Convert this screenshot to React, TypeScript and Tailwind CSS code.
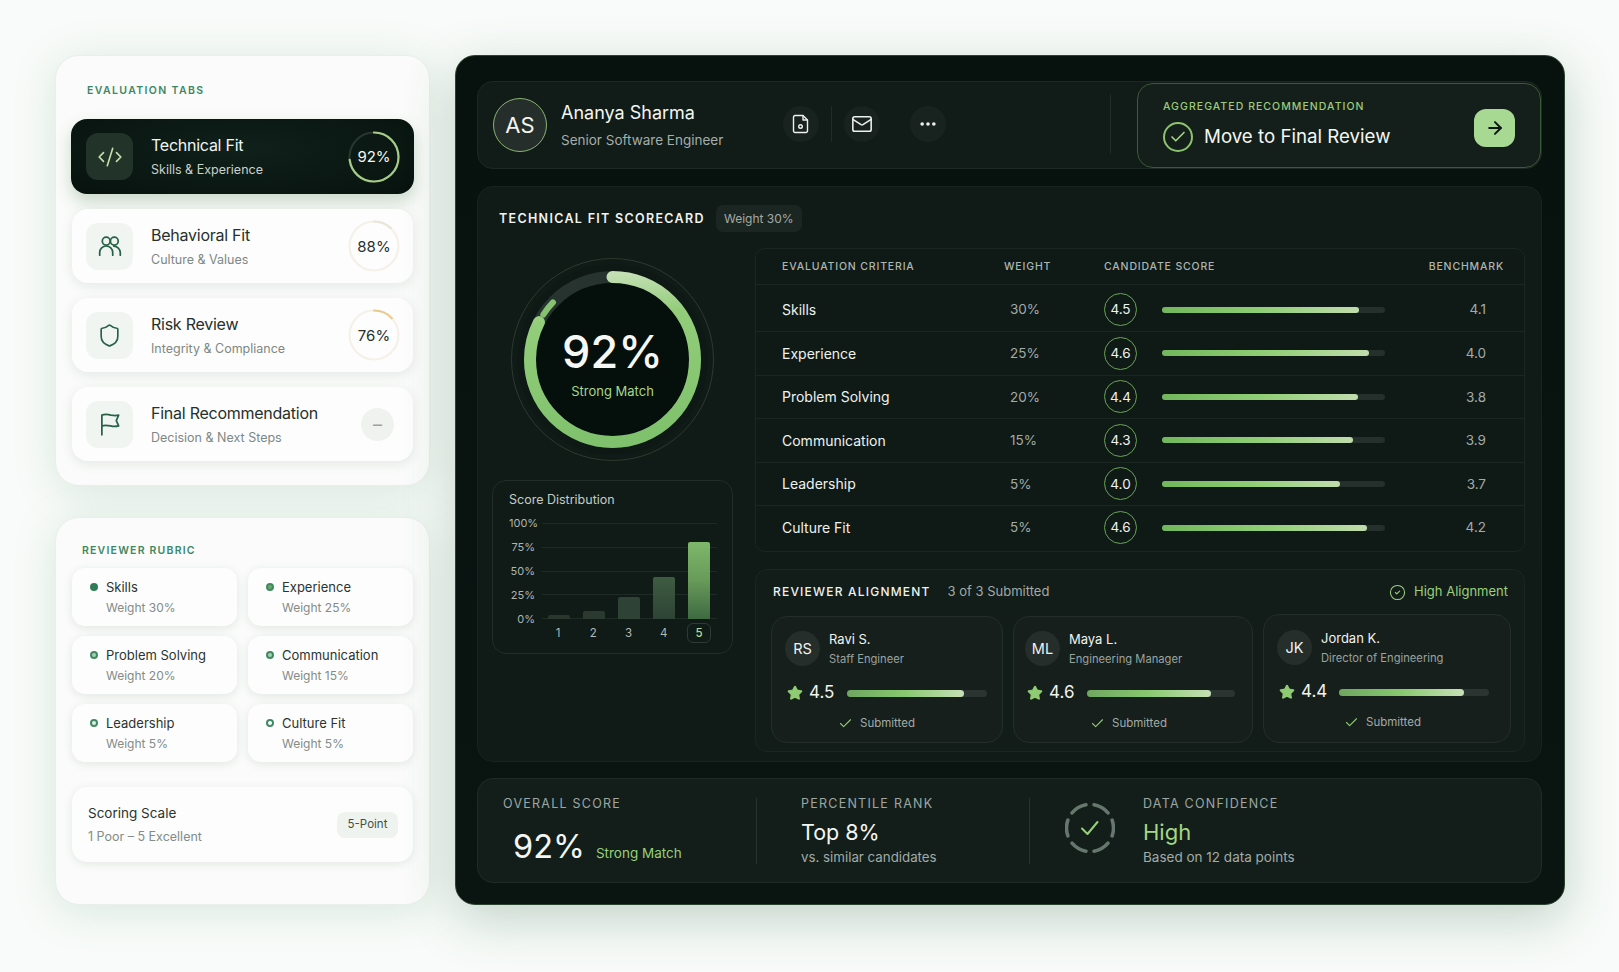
import { ArrowRight, Check, CircleCheck, CodeXml, Ellipsis, Mail, Shield, Star } from "lucide-react";
import type { ReactNode } from "react";

const PeopleIcon = () => (
  <svg width="26" height="26" viewBox="0 0 24 24" fill="none" stroke="currentColor" strokeWidth="1.6" strokeLinecap="round">
    <circle cx="8.500" cy="7.500" r="3.600" />
    <circle cx="16" cy="7.500" r="3.600" />
    <path d="M2.500 20.500v-2.500a6 6 0 0 1 12 0v2.500" />
    <path d="M15.500 12.200a6 6 0 0 1 6 5.800v2.500" />
  </svg>
);

const FlagIcon = () => (
  <svg width="26" height="26" viewBox="0 0 24 24" fill="none" stroke="currentColor" strokeWidth="1.6" strokeLinecap="round" strokeLinejoin="round">
    <path d="M4.500 22V3.800c3-1 6-.6 8.500 0 2.500.5 5 .5 7 0l-2.200 5 2.200 5c-2.500.7-5 .6-7.500 0-2.800-.6-5.500-.9-8 0" />
  </svg>
);

const tabs = [
  { title: "Behavioral Fit", sub: "Culture & Values", score: "88%", icon: <PeopleIcon />, arc: 0.12, color: "#e9e5d6" },
  { title: "Risk Review", sub: "Integrity & Compliance", score: "76%", icon: <Shield size={25} strokeWidth={1.6} />, arc: 0.13, color: "#ecca8e" },
];

const rubric = [
  { name: "Skills", weight: "Weight 30%", dot: "bg-[#2f7d58] border-[#2f7d58]" },
  { name: "Experience", weight: "Weight 25%", dot: "bg-[#6aa86a] border-[#3f8a5f]" },
  { name: "Problem Solving", weight: "Weight 20%", dot: "bg-[#a9cdb0] border-[#3f8a64]" },
  { name: "Communication", weight: "Weight 15%", dot: "bg-[#a9cdb0] border-[#3f8a64]" },
  { name: "Leadership", weight: "Weight 5%", dot: "bg-[#e3efe4] border-[#3f8a64]" },
  { name: "Culture Fit", weight: "Weight 5%", dot: "bg-white border-[#3f8a64]" },
];

const criteria = [
  { name: "Skills", weight: "30%", score: "4.5", fill: 88.5, bench: "4.1" },
  { name: "Experience", weight: "25%", score: "4.6", fill: 92.7, bench: "4.0" },
  { name: "Problem Solving", weight: "20%", score: "4.4", fill: 88, bench: "3.8" },
  { name: "Communication", weight: "15%", score: "4.3", fill: 85.5, bench: "3.9" },
  { name: "Leadership", weight: "5%", score: "4.0", fill: 79.8, bench: "3.7" },
  { name: "Culture Fit", weight: "5%", score: "4.6", fill: 92, bench: "4.2" },
];

const reviewers = [
  { initials: "RS", name: "Ravi S.", role: "Staff Engineer", score: "4.5", fill: 83.5, bar: "w-[140px]", pad: "pl-[13px] pt-[13px] h-[127px]", sub: "pr-[34px]" },
  { initials: "ML", name: "Maya L.", role: "Engineering Manager", score: "4.6", fill: 84, bar: "w-[148px]", pad: "pl-[11px] pt-[13px] h-[127px]", sub: "pr-[20px]" },
  { initials: "JK", name: "Jordan K.", role: "Director of Engineering", score: "4.4", fill: 83.5, bar: "w-[150px]", pad: "pl-[13px] pt-[14px] h-[129px] -mt-[2px]", sub: "pr-[22px]" },
];

const bars = [
  { label: "1", h: "h-[4px]", bg: "bg-[#28362d]" },
  { label: "2", h: "h-[8px]", bg: "bg-[#2a3a30]" },
  { label: "3", h: "h-[22px]", bg: "bg-[#2e4235]" },
  { label: "4", h: "h-[42px]", bg: "bg-gradient-to-b from-[#3e5c42] to-[#2e4335]" },
  { label: "5", h: "h-[77px]", bg: "bg-gradient-to-b from-[#7eb76a] via-[#689a5a] to-[#3f6a42]" },
];

const Ring = ({ arc, color, track, children }: { arc: number; color: string; track: string; children: ReactNode }) => (
  <div className="relative h-[52px] w-[52px] shrink-0">
    <svg width="52" height="52" viewBox="0 0 52 52" className="-rotate-90">
      <circle cx="26" cy="26" r="24.5" fill="none" stroke={track} strokeWidth="2.2" />
      <circle cx="26" cy="26" r="24.5" fill="none" stroke={color} strokeWidth="2.2" pathLength={100} strokeDasharray={`${arc * 100} 100`} strokeLinecap="round" />
    </svg>
    <div className="absolute inset-0 flex items-center justify-center pt-[2px] text-[15px]">{children}</div>
  </div>
);

const TabText = ({ title, sub, dark }: { title: string; sub: string; dark?: boolean }) => (
  <div className="ml-[18px] flex-1">
    <div className={`text-[16px] leading-[22px] tracking-[-0.25px] ${dark ? "text-[#f1f5f1]" : "text-[#26302c]"}`}>{title}</div>
    <div className={`mt-[5px] text-[12.500px] leading-[18px] ${dark ? "text-[#c9d2cb]" : "text-[#7e8884]"}`}>{sub}</div>
  </div>
);

const panelShadow = "shadow-[0_6px_40px_rgba(110,165,125,0.22)]";

const LeftColumn = () => (
  <div className="flex w-[375px] shrink-0 flex-col gap-[31px]">
    <section className={`h-[431px] rounded-[24px] border border-[#e9efea] bg-[#fafbfa] px-[16px] pt-[27px] ${panelShadow}`}>
      <h2 className="pl-[15px] text-[10.500px] leading-[16px] font-semibold tracking-[0.13em] text-[#3d8763]">EVALUATION TABS</h2>
      <div className="mt-[20px] flex flex-col gap-[15px]">
        <div className="-mx-px flex h-[75px] items-center rounded-[16px] bg-[radial-gradient(ellipse_at_50%_40%,#10201a,#07120e)] pr-[14px] pl-[15px] shadow-[0_8px_16px_rgba(80,130,80,0.28)]">
          <div className="flex h-[47px] w-[47px] items-center justify-center rounded-[12px] bg-[#223329] text-[#c6e0ab]">
            <CodeXml size={26} strokeWidth={1.5} />
          </div>
          <TabText title="Technical Fit" sub="Skills & Experience" dark />
          <Ring arc={0.73} color="#a6cc86" track="#27352e"><span className="text-[#f4f7f3]">92%</span></Ring>
        </div>
        {tabs.map((t) => (
          <div key={t.title} className="flex h-[74px] items-center rounded-[16px] bg-[#fdfdfd] pr-[13px] pl-[14px] shadow-[0_3px_12px_rgba(70,100,80,0.12)]">
            <div className="flex h-[47px] w-[47px] items-center justify-center rounded-[12px] bg-[#f1f5f2] text-[#276247]">{t.icon}</div>
            <TabText title={t.title} sub={t.sub} />
            <Ring arc={t.arc} color={t.color} track="#f4f1e8"><span className="text-[#26302c]">{t.score}</span></Ring>
          </div>
        ))}
        <div className="flex h-[74px] items-center rounded-[16px] bg-[#fdfdfd] pr-[19px] pl-[14px] shadow-[0_3px_12px_rgba(70,100,80,0.12)]">
          <div className="flex h-[47px] w-[47px] items-center justify-center rounded-[12px] bg-[#f1f5f2] text-[#276247]">
            <FlagIcon />
          </div>
          <TabText title="Final Recommendation" sub="Decision & Next Steps" />
          <div className="flex h-[33px] w-[33px] items-center justify-center rounded-full bg-[#eff2ef] text-[18px] text-[#9aa5a0]">–</div>
        </div>
      </div>
    </section>

    <section className={`h-[388px] rounded-[24px] border border-[#e9efea] bg-[#fafbfa] px-[16px] pt-[25px] ${panelShadow}`}>
      <h2 className="pl-[10px] text-[10.500px] leading-[16px] font-semibold tracking-[0.115em] text-[#3d8763]">REVIEWER RUBRIC</h2>
      <div className="mt-[9px] grid grid-cols-[165px_165px] gap-x-[11px] gap-y-[10px]">
        {rubric.map((r) => (
          <div key={r.name} className="flex h-[58px] rounded-[13px] bg-[#fdfdfd] pt-[10px] pl-[18px] shadow-[0_2px_8px_rgba(70,100,80,0.13)]">
            <span className={`mt-[5px] h-[8px] w-[8px] shrink-0 rounded-full border-2 ${r.dot}`} />
            <div className="ml-[8px]">
              <div className="text-[13px] leading-[18px] text-[#2b3430]">{r.name}</div>
              <div className="mt-[3px] text-[12px] leading-[18px] text-[#838c88]">{r.weight}</div>
            </div>
          </div>
        ))}
      </div>
      <div className="mt-[25px] flex h-[75px] items-center justify-between rounded-[15px] bg-[#fcfdfc] pr-[15px] pl-[16px] shadow-[0_2px_8px_rgba(70,100,80,0.12)]">
        <div className="-mt-[1px]">
          <div className="text-[13.500px] leading-[20px] text-[#2b3430]">Scoring Scale</div>
          <div className="mt-[5px] text-[12.500px] leading-[18px] text-[#838c88]">1 Poor – 5 Excellent</div>
        </div>
        <div className="flex h-[26px] w-[61px] items-center justify-center rounded-[8px] bg-[#eff3ef] text-[11.500px] text-[#3d5248]">5-Point</div>
      </div>
    </section>
  </div>
);

const iconButton = "flex h-[36px] w-[36px] items-center justify-center rounded-full bg-[#18221f] text-[#eef1ee]";

const CandidateBar = () => (
  <div className="flex h-[88px] items-end justify-between rounded-[16px] border border-[#1c2824] bg-[#111b18]">
    <div className="flex h-[88px] items-center pl-[15px]">
      <div className="mt-[2px] flex h-[54px] w-[54px] items-center justify-center rounded-full border border-[#89b571] bg-[#252e2b] text-[22px] text-[#f2f5f2]">AS</div>
      <div className="ml-[14px] w-[222px] pt-[3px]">
        <div className="text-[18px] leading-[24px] text-[#f3f6f3]">Ananya Sharma</div>
        <div className="mt-[5px] text-[13.500px] leading-[20px] text-[#a5aeaa]">Senior Software Engineer</div>
      </div>
      <div className={iconButton}>
        <svg width="18" height="20" viewBox="0 0 18 20" fill="none" stroke="currentColor" strokeWidth="1.4" strokeLinejoin="round">
          <path d="M3 1.500h8l4.500 4.500v11a1.500 1.500 0 0 1-1.500 1.500H3A1.500 1.500 0 0 1 1.500 17V3A1.500 1.500 0 0 1 3 1.500Z" />
          <path d="M11 1.500V6h4.500" />
          <circle cx="8.500" cy="12.500" r="1.800" />
        </svg>
      </div>
      <div className="mx-[12px] h-[36px] w-px bg-[#212c28]" />
      <div className={iconButton}>
        <Mail size={22} strokeWidth={1.7} />
      </div>
      <div className={`ml-[30px] ${iconButton}`}>
        <Ellipsis size={20} strokeWidth={2.4} />
      </div>
    </div>
    <div className="flex h-[88px] items-end">
      <div className="mr-[26px] mb-[14px] h-[60px] w-px bg-[#212c28]" />
      <div className="flex h-[85px] w-[404px] items-center justify-between rounded-[16px] border border-[#3b5a35] bg-[#141f1b] pr-[25px] pl-[25px]">
        <div>
          <div className="text-[10.500px] leading-[14px] font-medium tracking-[0.1em] text-[#9ccb7c]">AGGREGATED RECOMMENDATION</div>
          <div className="mt-[8px] flex items-center gap-[11px]">
            <div className="flex h-[30px] w-[30px] items-center justify-center rounded-full border-2 border-[#8cc46d] text-[#a3d484]">
              <Check size={18} strokeWidth={2.2} />
            </div>
            <span className="text-[18.700px] leading-[30px] text-[#f3f6f3]">Move to Final Review</span>
          </div>
        </div>
        <div className="mt-[5px] flex h-[38px] w-[41px] items-center justify-center rounded-[12px] bg-[#a8d993] text-[#0d1713]">
          <ArrowRight size={20} strokeWidth={2.4} />
        </div>
      </div>
    </div>
  </div>
);

const ScoreDial = () => (
  <div className="relative mt-[10px] h-[203px] w-[241px]">
    <svg width="241" height="203" viewBox="0 0 241 203" className="mx-auto">
      <defs>
        <linearGradient id="dial" x1="1" y1="0.4" x2="0" y2="0.5">
          <stop offset="0" stopColor="#c3dfb3" />
          <stop offset="0.25" stopColor="#93cd7a" />
          <stop offset="1" stopColor="#7fc16c" />
        </linearGradient>
      </defs>
      <circle cx="120.500" cy="101.500" r="101" fill="none" stroke="#2a3c2c" strokeWidth="1" />
      <circle cx="120.500" cy="101.500" r="95" fill="#0c1613" opacity="0.5" />
      <circle cx="120.500" cy="101.500" r="82.500" fill="#050f0c" stroke="#27332e" strokeWidth="12" />
      <circle cx="120.500" cy="101.500" r="82.500" fill="none" stroke="url(#dial)" strokeWidth="12" strokeLinecap="round" pathLength={100} strokeDasharray="82.500 100" transform="rotate(-90 120.500 101.500)" />
      <circle cx="120.500" cy="101.500" r="82.500" fill="none" stroke="#86c26f" strokeWidth="6" strokeLinecap="round" pathLength={100} strokeDasharray="3 100" transform="rotate(213 120.500 101.500)" />
    </svg>
    <div className="absolute inset-0 flex flex-col items-center pt-[66px]">
      <div className="text-[45px] leading-[56px] font-medium text-[#f6f8f6]">92%</div>
      <div className="mt-[1px] text-[13px] leading-[20px] text-[#a5d68b]">Strong Match</div>
    </div>
  </div>
);

const ScoreDistribution = () => (
  <div className="mt-[19px] h-[174px] w-[241px] rounded-[14px] border border-[#212d29] bg-[#101a17] pt-[10px] pl-[16px]">
    <div className="text-[12.500px] leading-[18px] text-[#c4ccc7]">Score Distribution</div>
    <div className="mt-[7px] flex">
      <div className="flex h-[110px] w-[26px] flex-col justify-between text-right text-[11px] leading-[14px] text-[#aeb6b1]">
        {["100%", "75%", "50%", "25%", "0%"].map((l) => (
          <span key={l}>{l}</span>
        ))}
      </div>
      <div className="ml-[7px] w-[175px]">
        <div className="relative h-[110px] px-[6px] py-[7px]">
          <div className="-mx-[6px] flex h-[96px] flex-col justify-between">
            {[0, 1, 2, 3, 4].map((i) => (
              <div key={i} className="h-px bg-[#1e2a26]" />
            ))}
          </div>
          <div className="absolute right-[7px] bottom-[7px] left-[6px] flex items-end justify-between">
            {bars.map((b) => (
              <div key={b.label} className={`w-[22px] rounded-t-[2px] ${b.h} ${b.bg}`} />
            ))}
          </div>
        </div>
        <div className="-mt-[3px] flex justify-between pr-[6px] pl-[4px] text-[11.500px] leading-[20px] text-[#b2bab5]">
          {bars.map((b) => (
            <div key={b.label} className={`flex h-[20px] w-[24px] items-center justify-center ${b.label === "5" ? "rounded-[6px] border border-[#2d3b35] font-medium text-[#b3dc92]" : ""}`}>
              {b.label}
            </div>
          ))}
        </div>
      </div>
    </div>
  </div>
);

const CriteriaTable = () => (
  <div className="h-[304px] rounded-[10px] border border-[#1b2623] bg-[#0f1916]">
    <div className="grid h-[36px] grid-cols-[248px_100px_1fr_auto] items-center border-b border-[#1b2623] pr-[20px] pl-[26px] text-[10.500px] font-medium tracking-[0.08em] text-[#adb6b1]">
      <span>EVALUATION CRITERIA</span>
      <span className="-ml-[26px]">WEIGHT</span>
      <span className="-ml-[26px]">CANDIDATE SCORE</span>
      <span>BENCHMARK</span>
    </div>
    {criteria.map((c, i) => (
      <div
        key={c.name}
        className={`grid grid-cols-[248px_100px_58px_223px_1fr] items-center border-b border-[#1b2623] last:border-b-0 ${i === 0 ? "h-[47px] pt-[3px]" : i === 5 ? "h-[46px] pb-[3px]" : "h-[43.500px]"}`}
      >
        <span className="pl-[26px] text-[14px] text-[#eef2ee]">{c.name}</span>
        <span className="pl-[6px] text-[13.500px] text-[#a2aba6]">{c.weight}</span>
        <div className="flex h-[33px] w-[33px] items-center justify-center rounded-full border border-[#69a553] text-[13.500px] text-[#f0f3f0]">{c.score}</div>
        <div className="h-[6px] rounded-full bg-[#252f2c]">
          <div className="h-full rounded-full bg-gradient-to-r from-[#72b75b] via-[#8fce74] to-[#c0dcac]" style={{ width: `${c.fill}%` }} />
        </div>
        <span className="pr-[38px] text-right text-[13.500px] text-[#a2aba6]">{c.bench}</span>
      </div>
    ))}
  </div>
);

const ReviewerAlignment = () => (
  <div className="mt-[17px] h-[183px] rounded-[12px] border border-[#1b2623] bg-[#121c19] pt-[12px] pr-[15px] pl-[15px]">
    <div className="flex h-[20px] items-center justify-between pr-[1px] pl-[2px]">
      <div className="flex items-center gap-[17px]">
        <span className="text-[12px] font-medium tracking-[0.1em] text-[#eef2ee]">REVIEWER ALIGNMENT</span>
        <span className="text-[13px] text-[#a2aba6]">3 of 3 Submitted</span>
      </div>
      <div className="flex items-center gap-[8px] text-[13px] text-[#9bd07c]">
        <CircleCheck size={17} strokeWidth={1.5} />
        High Alignment
      </div>
    </div>
    <div className="mt-[14px] grid grid-cols-[232px_240px_248px] items-start gap-x-[10px]">
      {reviewers.map((r) => (
        <div key={r.name} className={`rounded-[16px] border border-[#232e2a] bg-[#161f1c] ${r.pad}`}>
          <div className="flex items-center gap-[9px]">
            <div className="flex h-[35px] w-[35px] items-center justify-center rounded-full bg-[#252e2b] text-[14.500px] text-[#eef2ee]">{r.initials}</div>
            <div>
              <div className="text-[13px] leading-[18px] text-[#f0f3f0]">{r.name}</div>
              <div className="mt-[3px] text-[11.200px] leading-[16px] text-[#9aa39e]">{r.role}</div>
            </div>
          </div>
          <div className="mt-[13px] flex h-[26px] items-center pl-[2px]">
            <Star size={16} fill="#8fcb72" stroke="#8fcb72" />
            <span className="ml-[6px] w-[38px] text-[17px] text-[#f0f3f0]">{r.score}</span>
            <div className={`h-[7px] rounded-full bg-[#2a3431] ${r.bar}`}>
              <div className="h-full rounded-full bg-gradient-to-r from-[#6fa660] via-[#88c96f] to-[#c7e0b6]" style={{ width: `${r.fill}%` }} />
            </div>
          </div>
          <div className={`mt-[8px] flex items-center justify-center gap-[7px] text-[11.500px] leading-[18px] text-[#a2aba6] ${r.sub}`}>
            <Check size={15} strokeWidth={1.7} className="text-[#8fcb72]" />
            Submitted
          </div>
        </div>
      ))}
    </div>
  </div>
);

const Gauge = () => (
  <svg width="50" height="54" viewBox="0 0 50 54" fill="none">
    <circle cx="25" cy="27" r="23.500" stroke="#66786d" strokeWidth="3.500" strokeLinecap="round" pathLength={100} strokeDasharray="11 5.667" strokeDashoffset="5.500" />
    <path d="M17 27.500l5.500 5.500 10-12" stroke="#94d177" strokeWidth="2" strokeLinecap="round" strokeLinejoin="round" />
  </svg>
);

const summaryLabel = "-mt-[2px] text-[12.500px] leading-[16px] tracking-[0.1em] text-[#9ea7a2]";

const SummaryBar = () => (
  <div className="mt-[16px] flex h-[105px] items-center rounded-[16px] border border-[#1f2b27] bg-[#131e1b]">
    <div className="flex h-[66px] w-[279px] shrink-0 flex-col justify-between border-r border-[#25322d] pl-[25px]">
      <div className={summaryLabel}>OVERALL SCORE</div>
      <div className="-mb-[6px] flex items-baseline pl-[10px]">
        <span className="text-[32.500px] leading-[46px] text-[#f3f6f3]">92%</span>
        <span className="ml-[11px] text-[13.500px] text-[#97cf76]">Strong Match</span>
      </div>
    </div>
    <div className="flex h-[66px] w-[273px] shrink-0 flex-col border-r border-[#25322d] pl-[44px]">
      <div className={summaryLabel}>PERCENTILE RANK</div>
      <div className="mt-[5px] text-[21.500px] leading-[30px] text-[#f3f6f3]">Top 8%</div>
      <div className="text-[13.300px] leading-[20px] text-[#a2aba6]">vs. similar candidates</div>
    </div>
    <div className="ml-[35px] -mt-[5px] shrink-0">
      <Gauge />
    </div>
    <div className="ml-[28px] flex h-[66px] flex-col">
      <div className={summaryLabel}>DATA CONFIDENCE</div>
      <div className="mt-[5px] text-[22px] leading-[30px] text-[#a3d884]">High</div>
      <div className="text-[13.500px] leading-[20px] text-[#a2aba6]">Based on 12 data points</div>
    </div>
  </div>
);

export default function App() {
  return (
    <div className="h-[972px] w-[1619px] overflow-hidden bg-[#f8fbf9] font-['Inter',sans-serif]">
      <div className="flex gap-[25px] pt-[55px] pl-[55px]">
        <LeftColumn />
        <main className="h-[850px] w-[1110px] shrink-0 rounded-[20px] border border-[#2b4430] bg-gradient-to-b from-[#07120f] to-[#0a1512] pt-[25px] pr-[22px] pl-[21px] shadow-[0_14px_50px_rgba(70,120,85,0.3)]">
          <CandidateBar />
          <section className="mt-[17px] h-[576px] rounded-[16px] border border-[#18221f] bg-[#101a17] pr-[16px] pl-[14px]">
            <div className="flex items-center gap-[12px] pt-[18px] pl-[7px]">
              <h2 className="text-[12.500px] leading-[27px] font-semibold tracking-[0.105em] text-[#f0f3f0]">TECHNICAL FIT SCORECARD</h2>
              <span className="-ml-[1px] flex h-[27px] w-[86px] items-center justify-center rounded-[7px] bg-[#1b2522] text-[12px] text-[#a2aba6]">Weight 30%</span>
            </div>
            <div className="mt-[16px] flex gap-[22px]">
              <div className="w-[241px] shrink-0">
                <ScoreDial />
                <ScoreDistribution />
              </div>
              <div className="w-[770px] shrink-0">
                <CriteriaTable />
                <ReviewerAlignment />
              </div>
            </div>
          </section>
          <SummaryBar />
        </main>
      </div>
    </div>
  );
}
